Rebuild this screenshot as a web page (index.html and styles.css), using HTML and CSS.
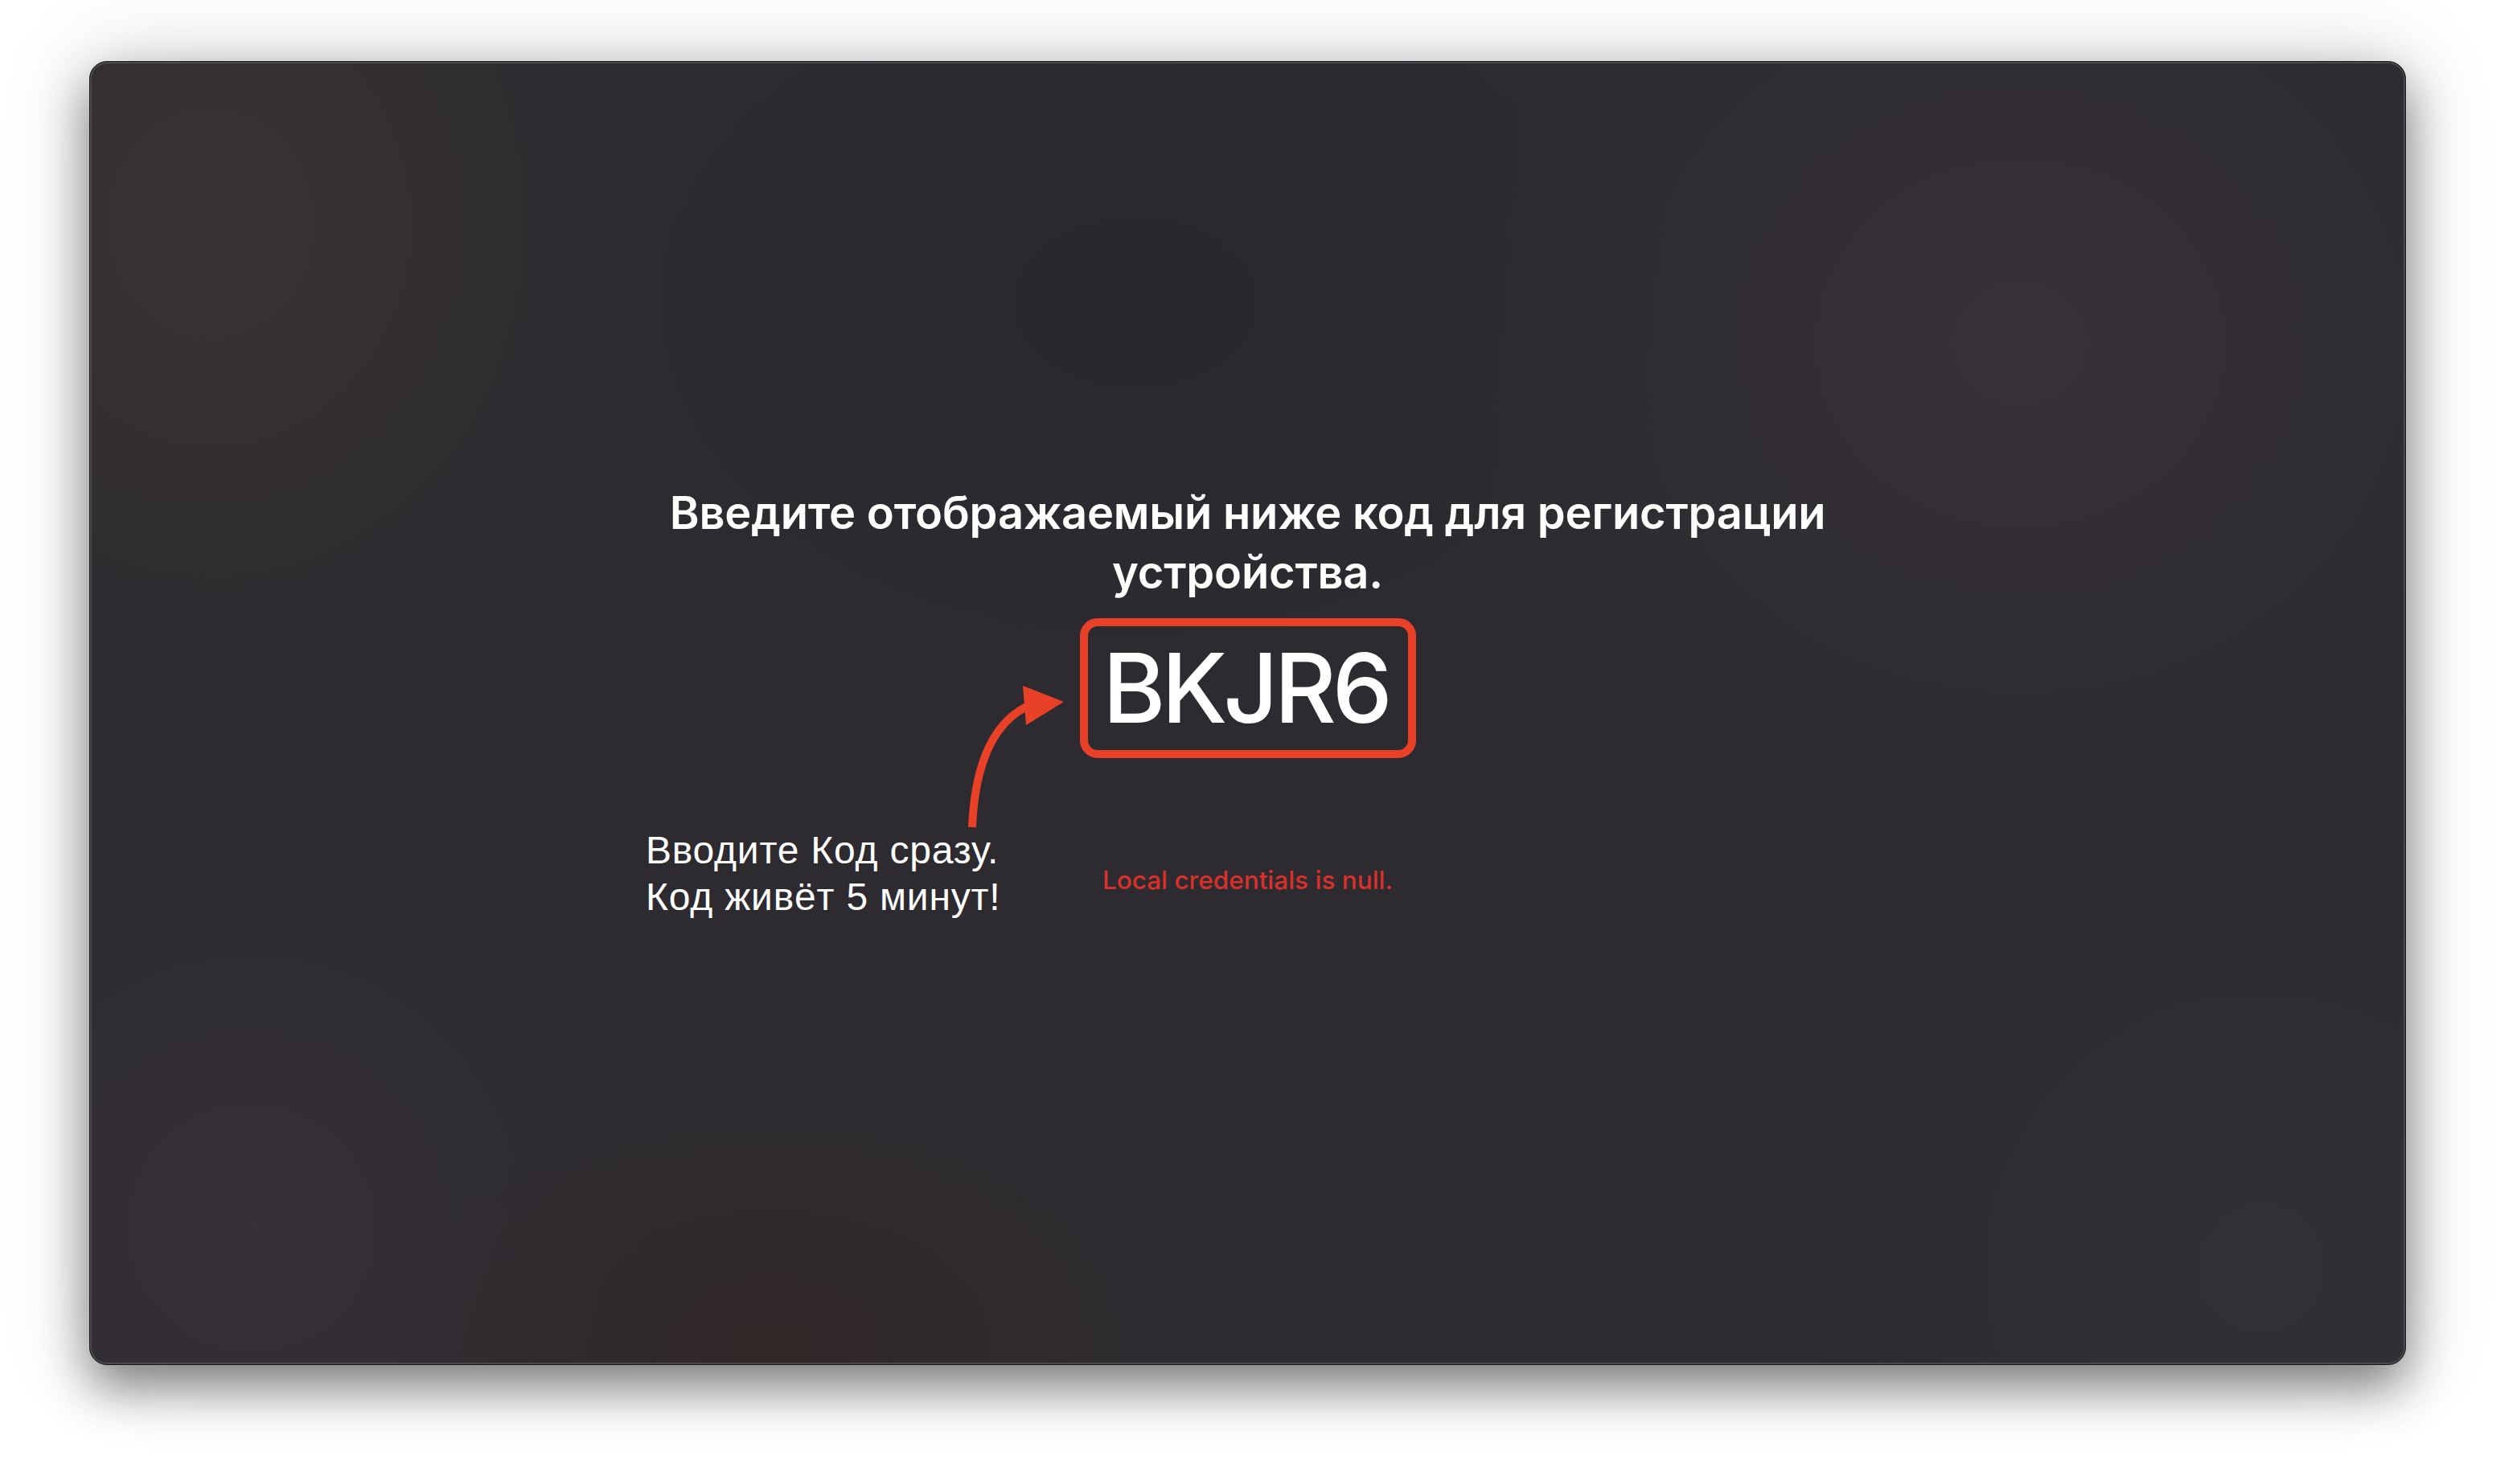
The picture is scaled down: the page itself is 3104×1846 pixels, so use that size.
FILE: index.html
```html
<!DOCTYPE html>
<html lang="ru">
<head>
<meta charset="utf-8">
<title>Регистрация устройства</title>
<link rel="stylesheet" href="styles.css">
</head>
<body>
<div class="stage">
  <main class="window">
    <div class="content">
      <h1 class="title">Введите отображаемый ниже код для регистрации устройства.</h1>
      <div class="code-box"><span class="code">BKJR6</span></div>
      <p class="error">Local credentials is null.</p>
    </div>
    <svg class="arrow" viewBox="1180 840 160 200" width="160" height="200" aria-hidden="true">
      <path d="M1209 1029 C1212 960 1230 895 1288 874" fill="none" stroke="#e84128" stroke-width="10" stroke-linecap="butt"/>
      <polygon points="1272,853 1323,873 1276,902" fill="#e84128"/>
    </svg>
    <p class="note">Вводите Код сразу.<br>Код живёт 5 минут!</p>
  </main>
</div>
</body>
</html>
```
FILE: styles.css
```css
html, body {
  margin: 0;
  padding: 0;
  background: #ffffff;
}

.stage {
  width: 3104px;
  height: 1846px;
  padding: 76px 0 0 111px;
  box-sizing: border-box;
}

.window {
  position: relative;
  width: 2881px;
  height: 1622px;
  box-sizing: border-box;
  border: 1px solid #161516;
  border-radius: 22px;
  overflow: hidden;
  background:
    radial-gradient(ellipse 1000px 700px at 1300px 300px, rgba(40, 39, 46, 0.7), rgba(40, 39, 46, 0) 70%),
    radial-gradient(ellipse 700px 450px at 850px 1600px, rgba(50, 39, 37, 0.8), rgba(50, 39, 37, 0) 70%),
    radial-gradient(ellipse 1000px 900px at 2400px 350px, rgba(58, 52, 58, 0.7), rgba(58, 52, 58, 0) 70%),
    radial-gradient(ellipse 800px 900px at 150px 200px, rgba(58, 52, 54, 0.8), rgba(58, 52, 54, 0) 70%),
    radial-gradient(ellipse 700px 700px at 200px 1450px, rgba(57, 51, 58, 0.7), rgba(57, 51, 58, 0) 70%),
    radial-gradient(ellipse 800px 800px at 2700px 1500px, rgba(52, 49, 55, 0.8), rgba(52, 49, 55, 0) 70%),
    #2d2b30;
  box-shadow:
    inset 0 0 0 2px rgba(255, 255, 255, 0.13),
    0 28px 60px rgba(0, 0, 0, 0.45),
    0 0 110px rgba(0, 0, 0, 0.18);
}

.content {
  display: flex;
  flex-direction: column;
  align-items: center;
  padding-top: 524px;
}

.title {
  margin: 0;
  max-width: 1480px;
  font-family: Inter, "Noto Sans", sans-serif;
  font-weight: 600;
  font-size: 56px;
  line-height: 74px;
  color: #ffffff;
  text-align: center;
  letter-spacing: -0.2px;
}

.code-box {
  margin-top: 20px;
  width: 418px;
  height: 174px;
  box-sizing: border-box;
  border: 10px solid #e84128;
  border-radius: 22px;
  display: flex;
  align-items: center;
  justify-content: center;
}

.code {
  font-family: Inter, "Noto Sans", sans-serif;
  font-weight: 500;
  font-size: 119px;
  line-height: 1;
  color: #ffffff;
  letter-spacing: -5px;
  padding-right: 5px;
}

.error {
  margin: 132px 0 0;
  font-family: Inter, "Noto Sans", sans-serif;
  font-weight: 500;
  font-size: 31.5px;
  line-height: 40px;
  color: #d8302a;
}

.arrow {
  position: absolute;
  left: 1068px;
  top: 763px;
}

.note {
  position: absolute;
  left: 691px;
  top: 952px;
  margin: 0;
  font-family: "Liberation Sans", Arial, sans-serif;
  font-size: 48px;
  line-height: 58px;
  letter-spacing: 0.8px;
  color: #ffffff;
}
```
